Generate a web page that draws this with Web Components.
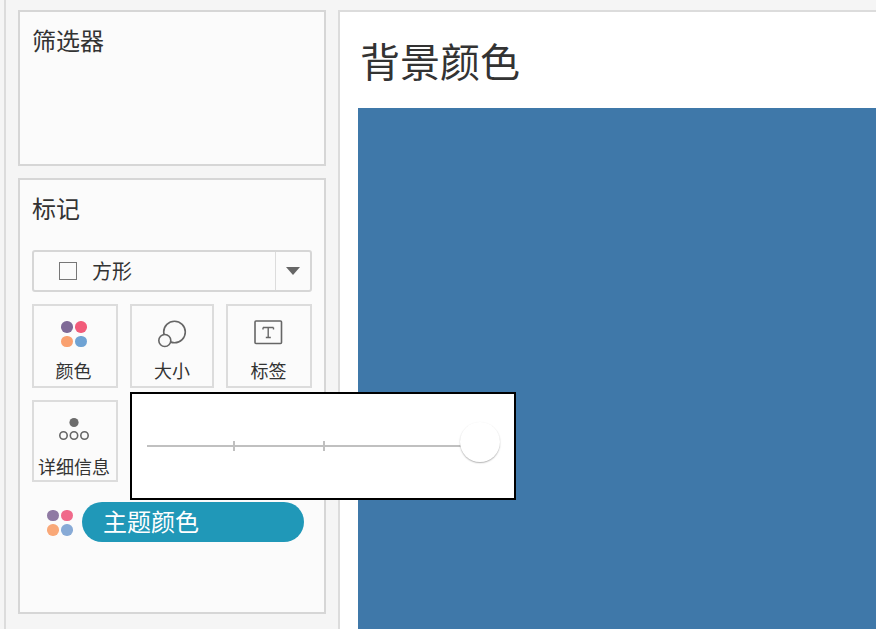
<!DOCTYPE html>
<html lang="zh"><head><meta charset="utf-8"><style>
html,body{margin:0;padding:0;background:#f5f5f5;font-family:"Noto Sans CJK SC","Liberation Sans",sans-serif;color:#333}
</style></head><body>
<x-app>
  <x-panel slot="side" title-text="筛选器" style="height:156px"></x-panel>
  <x-panel slot="side" title-text="标记" style="flex:1">
    <x-dropdown>方形</x-dropdown>
    <x-card-grid>
      <x-card label="颜色" style="padding-right:3px"><x-dots></x-dots></x-card>
      <x-card label="大小"><svg width="30" height="30" viewBox="0 0 30 30" fill="none" stroke="#666" stroke-width="1.6"><circle cx="17.5" cy="12" r="10.8"/><circle cx="7.8" cy="20.5" r="6" fill="#fbfbfb"/></svg></x-card>
      <x-card label="标签" style="padding-right:1px"><svg width="30" height="26" viewBox="0 0 30 26" fill="none"><rect x="1" y="1" width="26.5" height="22.5" stroke="#666" stroke-width="1.6" rx="1"/><path d="M9 7.5h10.5M14.2 7.5v10M11.8 17.5h5M9 7.5v2M19.5 7.5v2" stroke="#666" stroke-width="1.4"/></svg></x-card>
      <x-card label="详细信息" style="padding-right:2px;height:82px"><svg width="34" height="28" viewBox="0 0 34 28" fill="none"><circle cx="17" cy="6.5" r="4.6" fill="#6c6c6c"/><g stroke="#666" stroke-width="1.6"><circle cx="6.5" cy="19.5" r="3.7"/><circle cx="17" cy="19.5" r="3.7"/><circle cx="27.5" cy="19.5" r="3.7"/></g></svg></x-card>
    </x-card-grid>
    <x-field><x-dots soft></x-dots><x-pill>主题颜色</x-pill></x-field>
    <x-popup><x-slider></x-slider></x-popup>
  </x-panel>
  <x-view slot="main" title-text="背景颜色"></x-view>
</x-app>
<script>
function def(name, css, html){
  customElements.define(name, class extends HTMLElement{
    constructor(){super();const r=this.attachShadow({mode:'open'});r.innerHTML='<style>'+css+'</style>'+html;}
    connectedCallback(){
      this.shadowRoot.querySelectorAll('[data-attr]').forEach(n=>{n.textContent=this.getAttribute(n.dataset.attr)||''});
    }
  });
}
def('x-app',`
:host{display:flex;box-sizing:border-box;height:629px;overflow:hidden;gap:12px;padding:10px 0 0 0;position:relative}
.rule{position:absolute;left:4px;top:0;bottom:0;width:2px;background:#dcdcdc}
.side{display:flex;flex-direction:column;gap:12px;width:308px;margin-left:18px;flex:none;padding-bottom:15px;box-sizing:border-box}
.main{flex:1;min-width:0;display:flex}
`,`<div class="rule"></div><div class="side"><slot name="side"></slot></div><div class="main"><slot name="main"></slot></div>`);
def('x-panel',`
:host{display:flex;flex-direction:column;box-sizing:border-box;border:2px solid #d6d6d6;background:#fbfbfb;padding:0 12px;position:relative}
h2{margin:0;font:400 24px/34px "Noto Sans CJK SC","Liberation Sans",sans-serif;color:#333;padding-top:11px}
.body{display:flex;flex-direction:column;margin-top:25px}
`,`<h2 data-attr="title-text"></h2><div class="body"><slot></slot></div>`);
def('x-dropdown',`
:host{display:flex;box-sizing:border-box;height:42px;border:2px solid #d6d6d6;border-radius:3px;align-items:stretch;background:#fbfbfb}
.l{flex:1;display:flex;align-items:center;padding-left:25px;gap:15px;font-size:20px;color:#333;line-height:28px}
.sq{width:18px;height:18px;box-sizing:border-box;border:1.5px solid #777;flex:none}
.a{width:34px;border-left:1px solid #dcdcdc;display:flex;align-items:center;justify-content:center}
.t{width:0;height:0;border-left:7px solid transparent;border-right:7px solid transparent;border-top:8px solid #666}
`,`<div class="l"><span class="sq"></span><span><slot></slot></span></div><div class="a"><span class="t"></span></div>`);
def('x-card-grid',`
:host{display:grid;grid-template-columns:86px 84px 86px;column-gap:12px;row-gap:12px;margin-top:12px}
`,`<slot></slot>`);
def('x-card',`
:host{display:flex;flex-direction:column;align-items:center;box-sizing:border-box;height:84px;border:2px solid #dcdcdc;background:#fbfbfb}
.i{height:37px;margin-top:14px;display:flex;align-items:flex-start;justify-content:center;box-sizing:border-box}
.t{font-size:18px;line-height:26px;color:#333;white-space:nowrap}
`,`<div class="i"><slot></slot></div><div class="t" data-attr="label"></div>`);
def('x-dots',`
:host{display:grid;grid-template-columns:11px 11px;gap:3px;width:25px;margin-top:1px}
i{display:block;width:11.5px;height:11.5px;border-radius:50%}
.a{background:#7f6a97}.b{background:#f25c7a}.c{background:#f9a06f}.d{background:#6fa3d4}
:host([soft]) .a{background:#8f7aa3}:host([soft]) .b{background:#f0698a}:host([soft]) .c{background:#f9a878}:host([soft]) .d{background:#87aad6}
`,`<i class="a"></i><i class="b"></i><i class="c"></i><i class="d"></i>`);
def('x-field',`
:host{display:flex;align-items:center;gap:10px;margin:20px 8px 0 15px;height:40px}
`,`<slot></slot>`);
def('x-pill',`
:host{flex:1;display:flex;align-items:center;height:40px;border-radius:20px;background:#2098b8;color:#fff;font-size:24px;padding:0 0 3px 21px;box-sizing:border-box;line-height:36px}
`,`<slot></slot>`);
def('x-popup',`
:host{position:absolute;left:110px;top:212px;width:386px;height:108px;box-sizing:border-box;border:2.5px solid #000;background:#fff;display:block;z-index:5;padding:0 14px}
`,`<slot></slot>`);
def('x-slider',`
:host{display:block;position:relative;height:100%}
.track{position:absolute;left:1px;right:39px;top:51px;height:2px;background:#c0c0c0}
.tick{position:absolute;top:47px;width:2px;height:10px;background:#c0c0c0}
.knob{position:absolute;right:0;top:28px;width:40px;height:40px;border-radius:50%;background:#fff;box-shadow:0 1px 1.5px rgba(0,0,0,.3)}
`,`<div class="track"></div><div class="tick" style="left:87px"></div><div class="tick" style="left:177px"></div><div class="knob"></div>`);
def('x-view',`
:host{display:flex;flex-direction:column;flex:1;box-sizing:border-box;background:#fff;border-left:2px solid #dcdcdc;border-top:2px solid #dcdcdc;padding-left:18px;min-width:0}
h1{margin:0;font:400 40px/58px "Noto Sans CJK SC","Liberation Sans",sans-serif;color:#333;padding:19px 0 19px 2px}
.plot{flex:1;background:#3f78a9}
`,`<h1 data-attr="title-text"></h1><div class="plot"></div>`);
</script>
</body></html>
